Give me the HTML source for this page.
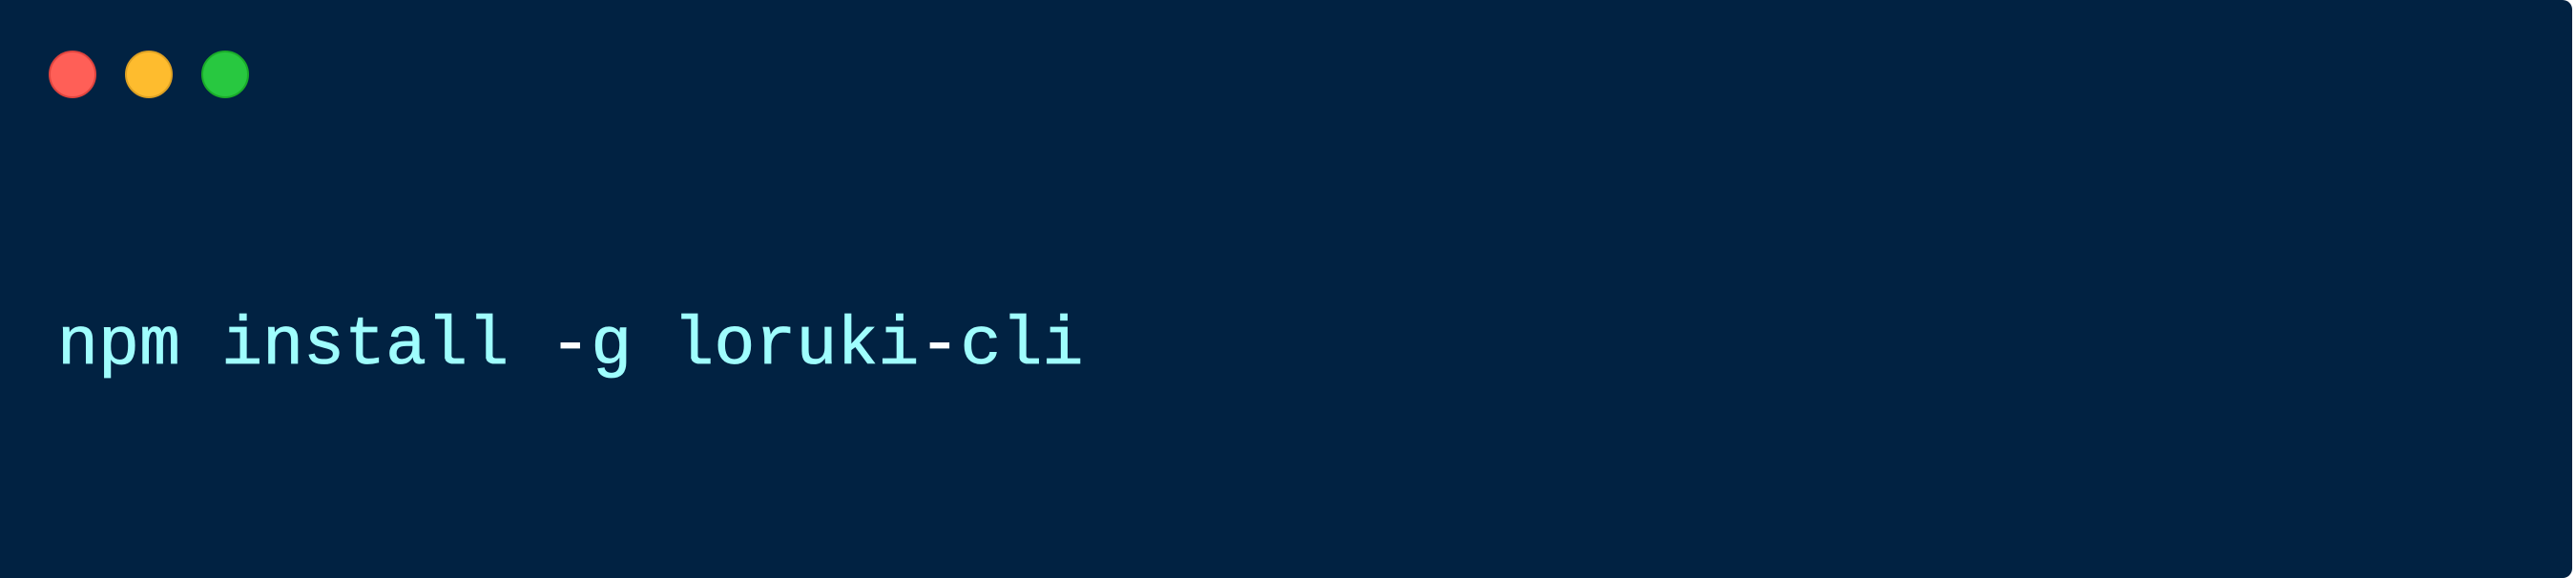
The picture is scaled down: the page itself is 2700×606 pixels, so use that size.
<!DOCTYPE html>
<html><head><style>
html,body{margin:0;padding:0;background:#fff;width:2700px;height:606px;overflow:hidden}
.box{position:absolute;left:0;top:0;width:2696px;height:606px;background:#012242;border-radius:0 10px 10px 0}
.dot{position:absolute;top:53px;width:50px;height:50px;border-radius:50%;box-sizing:border-box}
.t{position:absolute;left:60px;top:327px;font-family:"Liberation Mono",monospace;font-size:71.7px;line-height:71.7px;color:#9ffdfd;white-space:pre;-webkit-text-stroke:0.8px #9ffdfd}
.w{color:#ffffff;-webkit-text-stroke:0.8px #fff}
</style></head><body>
<div class="box"></div>
<div class="dot" style="left:51px;background:#ff5f57;border:2px solid #e0443e"></div>
<div class="dot" style="left:131px;background:#febc2e;border:2px solid #dea123"></div>
<div class="dot" style="left:211px;background:#28c840;border:2px solid #1aab29"></div>
<div class="t">npm install <span class="w">-</span>g loruki<span class="w">-</span>cli</div>
</body></html>
